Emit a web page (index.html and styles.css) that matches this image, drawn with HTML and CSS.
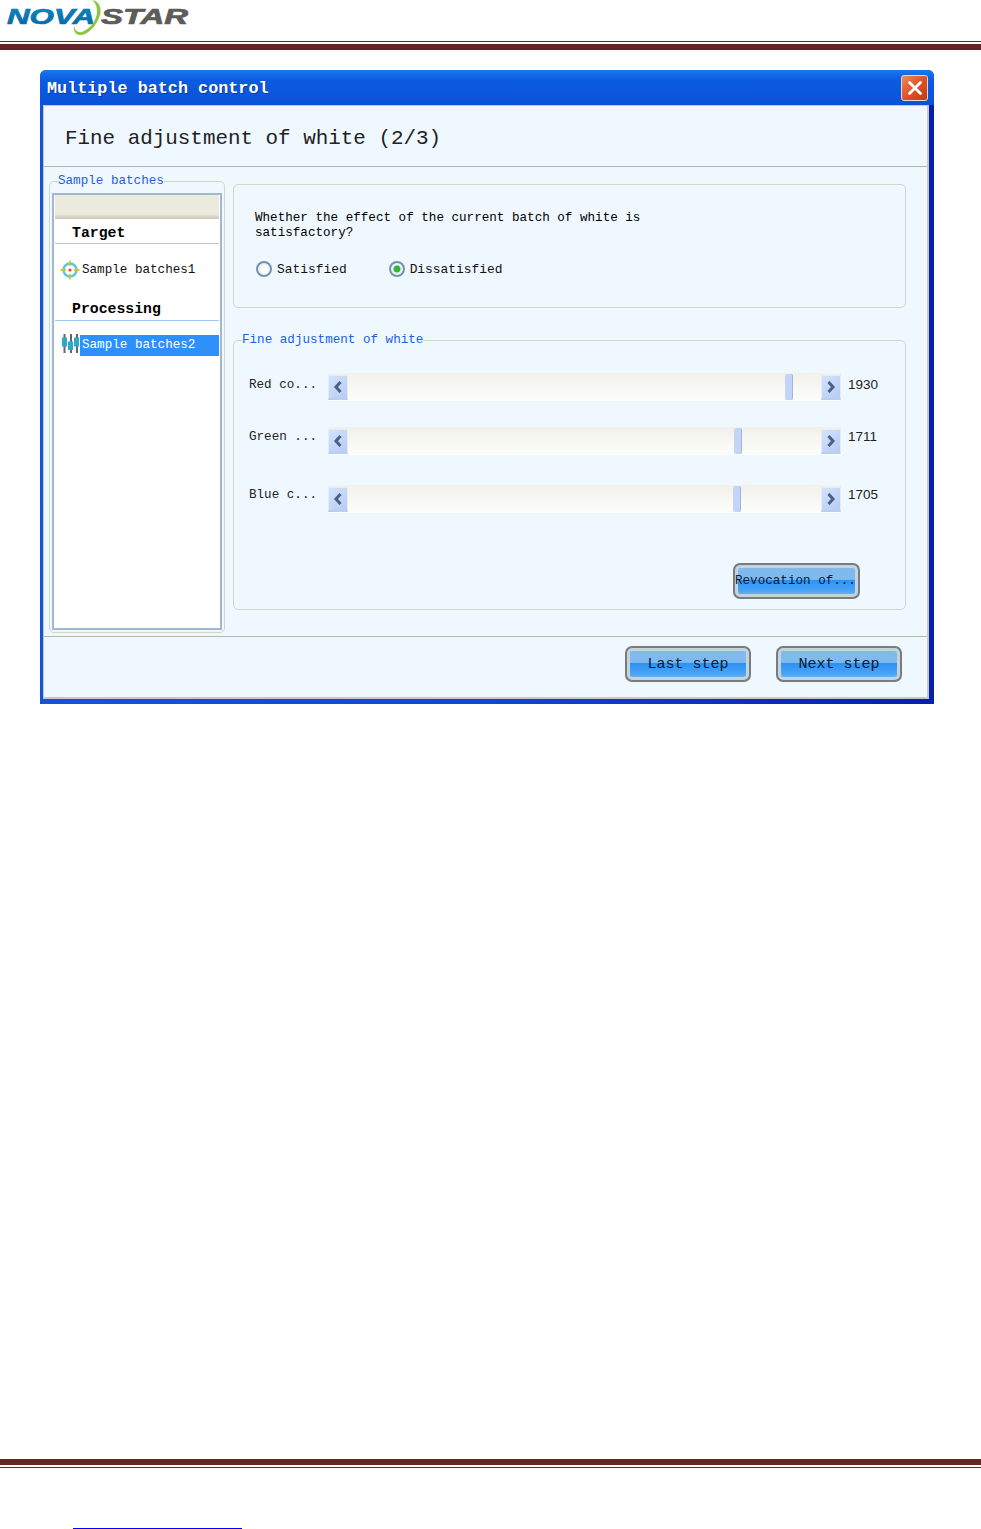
FILE: index.html
```html
<!DOCTYPE html>
<html>
  <head>
    <title>Multiple batch control</title>
    <meta charset="utf-8">
    <link rel="stylesheet" href="styles.css">
  </head>
  <body>
    <div class="page-head">
      <svg class="logo" width="200" height="41" viewBox="0 0 200 41">
        <defs>
          <linearGradient id="novaBlue" x1="0" y1="0" x2="0" y2="1">
            <stop offset="0" stop-color="#0b8fc9"/>
            <stop offset="1" stop-color="#0a5f9c"/>
          </linearGradient>
        </defs>
        <text class="logo-text" x="7" y="24" fill="url(#novaBlue)" stroke="#0a76b0" textLength="88" lengthAdjust="spacingAndGlyphs">NOVA</text>
        <text class="logo-text" x="101" y="24" fill="#5c5c58" stroke="#5c5c58" textLength="87" lengthAdjust="spacingAndGlyphs">STAR</text>
        <path d="M92 0C99 1 102 8 100 15C97 26 87 36 79 35C75 34 73 30 74 26C75 31 78 33 82 32C90 29 97 20 97 12C97 7 96 3 92 0Z" fill="#8cc63f"/>
      </svg>
    </div>
    <div class="rule-thick"></div>

    <div class="main">
      <div class="window">
        <div class="title-bar">
          <span class="title-text">Multiple batch control</span>
          <div class="close-btn">
            <svg width="16" height="16" viewBox="0 0 16 16">
              <path d="M2.5 2.5L13.5 13.5M13.5 2.5L2.5 13.5" stroke="#fff" stroke-width="2.8" stroke-linecap="round"/>
            </svg>
          </div>
        </div>
        <div class="inner">
          <div class="heading">Fine adjustment of white (2/3)</div>
          <div class="content">
            <fieldset class="group group-left">
              <legend>Sample batches</legend>
              <div class="batch-list">
                <div class="list-band"></div>
                <div class="list-head">Target</div>
                <div class="list-item">
                  <svg class="item-icon" width="20" height="20" viewBox="0 0 20 20">
                    <circle cx="10" cy="10" r="6.5" fill="#fdfdf0" stroke="#58c7d6" stroke-width="2.4"/>
                    <path d="M10 0.5V6M10 14V19.5M0.5 10H6M14 10H19.5" stroke="#cfc92f" stroke-width="1.8"/>
                    <circle cx="10" cy="10" r="1.6" fill="#ee3b3b"/>
                  </svg>
                  <span class="item-name">Sample batches1</span>
                </div>
                <div class="list-head list-head-second">Processing</div>
                <div class="list-item list-item-second">
                  <svg class="item-icon" width="20" height="22" viewBox="0 0 20 22">
                    <path d="M4.5 0V19M11 0V19M17 0V19" stroke="#666" stroke-width="2"/>
                    <rect x="2" y="3.5" width="5" height="9" fill="#2ba9c9"/>
                    <rect x="8" y="7.5" width="5" height="8.5" fill="#2ba9c9"/>
                    <rect x="14" y="3.5" width="5" height="9" fill="#2ba9c9"/>
                  </svg>
                  <span class="item-name item-selected">Sample batches2</span>
                </div>
              </div>
            </fieldset>

            <div class="right-col">
              <div class="group group-question">
                <div class="question">Whether the effect of the current batch of white is<br>satisfactory?</div>
                <div class="radios">
                  <div class="radio-option"><span class="radio"></span>Satisfied</div>
                  <div class="radio-option"><span class="radio radio-on"></span>Dissatisfied</div>
                </div>
              </div>

              <fieldset class="group group-adjust">
                <legend>Fine adjustment of white</legend>
                <div class="slider-row">
                  <span class="slider-label">Red co...</span>
                  <div class="slider">
                    <div class="arrow"><svg width="10" height="12" viewBox="0 0 10 12"><path d="M7.5 1L3 6L7.5 11" class="chevron"/></svg></div>
                    <div class="track"><div class="thumb" style="left: 437px"></div></div>
                    <div class="arrow"><svg width="10" height="12" viewBox="0 0 10 12"><path d="M2.5 1L7 6L2.5 11" class="chevron"/></svg></div>
                  </div>
                  <span class="slider-value">1930</span>
                </div>
                <div class="slider-row">
                  <span class="slider-label">Green ...</span>
                  <div class="slider">
                    <div class="arrow"><svg width="10" height="12" viewBox="0 0 10 12"><path d="M7.5 1L3 6L7.5 11" class="chevron"/></svg></div>
                    <div class="track"><div class="thumb" style="left: 386px"></div></div>
                    <div class="arrow"><svg width="10" height="12" viewBox="0 0 10 12"><path d="M2.5 1L7 6L2.5 11" class="chevron"/></svg></div>
                  </div>
                  <span class="slider-value">1711</span>
                </div>
                <div class="slider-row slider-row-last">
                  <span class="slider-label">Blue c...</span>
                  <div class="slider">
                    <div class="arrow"><svg width="10" height="12" viewBox="0 0 10 12"><path d="M7.5 1L3 6L7.5 11" class="chevron"/></svg></div>
                    <div class="track"><div class="thumb" style="left: 385px"></div></div>
                    <div class="arrow"><svg width="10" height="12" viewBox="0 0 10 12"><path d="M2.5 1L7 6L2.5 11" class="chevron"/></svg></div>
                  </div>
                  <span class="slider-value">1705</span>
                </div>
                <div class="revoke-row">
                  <button class="blue-btn revoke-btn">Revocation of...</button>
                </div>
              </fieldset>
            </div>
          </div>
          <div class="footer-bar">
            <button class="blue-btn">Last step</button>
            <button class="blue-btn">Next step</button>
          </div>
        </div>
      </div>
    </div>

    <div class="rule-thick"></div>
    <div class="rule-thin"></div>
    <div class="page-link"></div>
  </body>
</html>
```

FILE: styles.css
```css
html, body {
  margin: 0;
  padding: 0;
  background: #fff;
  overflow: hidden;
}
body {
  font-family: "Liberation Mono", monospace;
  font-size: 12.6px;
  color: #111;
}

/* page header and footer rules */
.page-head {
  height: 41px;
  border-bottom: 1px solid #652524;
  margin-bottom: 2px;
}
.logo {
  display: block;
}
.logo-text {
  font-family: "Liberation Sans", sans-serif;
  font-weight: bold;
  font-style: italic;
  font-size: 22px;
  stroke-width: 0.7px;
}
.rule-thick {
  height: 6px;
  background: #652524;
}
.rule-thin {
  height: 1px;
  margin-top: 2px;
  background: #652524;
}
.page-link {
  width: 169px;
  height: 1px;
  margin: 60px 0 0 73px;
  background: #0000ff;
}
.main {
  height: 1409px;
  padding: 20px 0 0 40px;
  box-sizing: border-box;
}

/* window */
.window {
  width: 894px;
  height: 634px;
  box-sizing: border-box;
  padding: 0 5px 5px 3px;
  background: linear-gradient(90deg, #1553dc 0%, #0d49d2 50%, #0420a8 100%);
  border-radius: 6px 6px 0 0;
}
.title-bar {
  height: 35px;
  display: flex;
  align-items: center;
  justify-content: space-between;
  padding: 2px 2px 0 4px;
  box-sizing: border-box;
  background: linear-gradient(180deg, #1a78ee 0%, #0b5be0 30%, #0a52d8 100%);
  margin: 0 -5px 0 -3px;
  border-radius: 6px 6px 0 0;
}
.title-text {
  color: #fff;
  font-size: 16.8px;
  font-weight: bold;
  padding-left: 3px;
  text-shadow: 1px 1px 0 #0a3a9c;
}
.close-btn {
  width: 27px;
  height: 26px;
  margin: -2px 4px 0 0;
  display: flex;
  align-items: center;
  justify-content: center;
  box-sizing: border-box;
  border: 1px solid #e9d8d0;
  border-radius: 3px;
  background: linear-gradient(135deg, #ee8a5e 0%, #dc4f22 55%, #c23c18 100%);
}
.inner {
  height: 594px;
  box-sizing: border-box;
  border: 1px solid #c9c9bd;
  border-right-width: 2px;
  border-bottom-width: 2px;
  background: #eff7ff;
}
.heading {
  height: 61px;
  box-sizing: border-box;
  padding: 18px 0 0 21px;
  border-bottom: 1px solid #b5b5aa;
  font-size: 20.9px;
  line-height: 30px;
  color: #222;
}
.content {
  height: 470px;
  box-sizing: border-box;
  display: flex;
  gap: 8px;
  padding: 7px 0 0 5px;
  border-bottom: 1px solid #b5b5aa;
}
.group {
  margin: 0;
  padding: 0;
  min-width: 0;
  box-sizing: border-box;
  border: 1px solid #d3d5c6;
  border-radius: 5px;
}
.group legend {
  margin-left: 8px;
  padding: 0;
  height: 14px;
  line-height: 14px;
  color: #1b5fe3;
}

/* sample batches list */
.group-left {
  width: 176px;
  height: 459px;
}
.batch-list {
  height: 437px;
  margin: 5px 2px 0;
  box-sizing: border-box;
  border: 2px solid #a2b8d0;
  padding: 0 1px;
  background: #fff;
}
.list-band {
  height: 24px;
  background: linear-gradient(180deg, #ece9dd 0%, #ece9dd 80%, #c9c5b6 100%);
}
.list-head {
  height: 25px;
  box-sizing: border-box;
  padding-left: 17px;
  line-height: 29px;
  font-size: 14.8px;
  font-weight: bold;
  color: #000;
  border-bottom: 1px solid #9ec8f2;
}
.list-head-second {
  margin-top: 15px;
  line-height: 27px;
}
.list-item {
  display: flex;
  align-items: center;
  height: 22px;
  margin-top: 15px;
  padding-left: 5px;
}
.list-item-second {
  margin-top: 13px;
}
.item-icon {
  flex-shrink: 0;
}
.item-name {
  flex: 1;
  height: 21px;
  line-height: 21px;
  padding-left: 2px;
}
.item-selected {
  background: #2e90fa;
  color: #fff;
}

/* right column */
.right-col {
  width: 673px;
  padding-top: 10px;
}
.group-question {
  height: 124px;
  padding: 26px 0 0 21px;
  margin-bottom: 25px;
}
.question {
  line-height: 15px;
  color: #000;
}
.radios {
  display: flex;
  gap: 41px;
  margin-top: 19px;
}
.radio-option {
  display: flex;
  align-items: center;
  gap: 5px;
  height: 18px;
  font-size: 12.9px;
}
.radio {
  width: 16px;
  height: 16px;
  margin-left: 1px;
  box-sizing: border-box;
  border: 2px solid #6f93b8;
  border-radius: 50%;
  background: radial-gradient(circle at 60% 60%, #fff 20%, #e2e2da 100%);
}
.radio-on {
  background: radial-gradient(circle, #2fb63c 0, #2fb63c 3px, #f4f4ee 4px);
}
.group-adjust {
  height: 277px;
  padding-top: 26px;
}

/* sliders */
.slider-row {
  display: flex;
  height: 28px;
  margin: 0 0 26px 15px;
}
.slider-row-last {
  margin-top: 30px;
  margin-bottom: 0;
}
.slider-label {
  width: 79px;
  line-height: 24px;
  color: #222;
}
.slider-row + .slider-row .slider-label,
.slider-row + .slider-row .slider-value {
  line-height: 20px;
}
.slider {
  width: 513px;
  display: flex;
  align-items: center;
  background: linear-gradient(180deg, #f1f0ea 0%, #fdfdfb 100%);
}
.arrow {
  width: 20px;
  height: 25px;
  flex-shrink: 0;
  display: flex;
  align-items: center;
  justify-content: center;
  box-sizing: border-box;
  border: 1px solid #e4ecfa;
  border-bottom: 2px solid #b9cdf2;
  background: linear-gradient(135deg, #d4e2fb 0%, #b6ccf5 100%);
}
.chevron {
  fill: none;
  stroke: #4d6185;
  stroke-width: 3;
}
.track {
  flex: 1;
  height: 100%;
  position: relative;
}
.thumb {
  position: absolute;
  top: 1px;
  width: 8px;
  height: 26px;
  box-sizing: border-box;
  border-right: 1px solid #9fb6e4;
  border-radius: 2px;
  background: #c3d5f6;
}
.slider-value {
  margin-left: 7px;
  font-family: "Liberation Sans", sans-serif;
  font-size: 13.5px;
  line-height: 24px;
  color: #222;
}
.revoke-row {
  display: flex;
  justify-content: flex-end;
  margin: 50px 45px 0 0;
}

/* buttons */
.blue-btn {
  width: 126px;
  height: 36px;
  padding: 0;
  box-sizing: border-box;
  border: 2px solid #787c80;
  border-radius: 7px;
  font-family: "Liberation Mono", monospace;
  font-size: 15px;
  color: #0a1a30;
  background: linear-gradient(180deg, #7fb9ee 0%, #7fb9ee 45%, #2b92f6 48%, #4aa3f5 80%, #7cbcf2 100%);
  box-shadow: inset 0 0 0 3px #c6d4d8;
}
.revoke-btn {
  width: 127px;
  padding-right: 3px;
  font-size: 12.6px;
  white-space: nowrap;
}
.footer-bar {
  display: flex;
  justify-content: flex-end;
  gap: 25px;
  padding: 9px 25px 0 0;
}
```
